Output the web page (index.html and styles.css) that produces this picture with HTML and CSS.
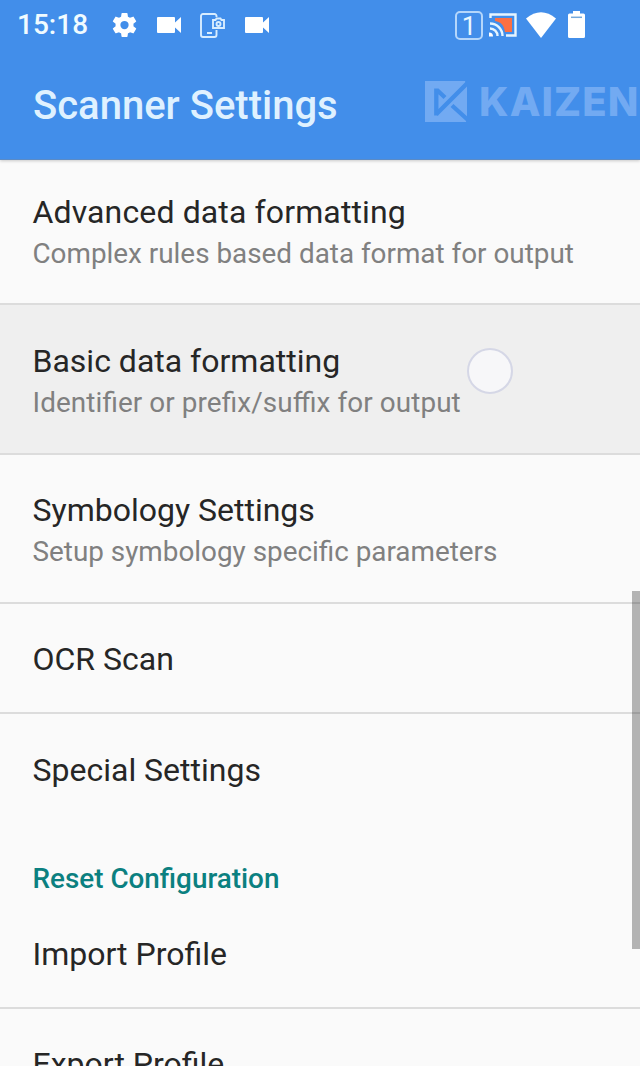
FILE: index.html
```html
<!DOCTYPE html>
<html lang="en">
<head>
<meta charset="utf-8">
<title>Scanner Settings</title>
<link rel="stylesheet" href="styles.css">
</head>
<body>
<div class="screen">
  <header class="header">
    <div class="status">
      <span class="clock">15:18</span>
      <div class="notifications">
        <svg class="gear" viewBox="2 2 20 20"><path d="M19.14 12.94c.04-.3.06-.61.06-.94 0-.32-.02-.64-.07-.94l2.03-1.58a.49.49 0 0 0 .12-.61l-1.92-3.32a.49.49 0 0 0-.59-.22l-2.39.96a7 7 0 0 0-1.62-.94l-.36-2.54a.48.48 0 0 0-.48-.41h-3.84a.48.48 0 0 0-.47.41l-.36 2.54c-.59.24-1.13.57-1.62.94l-2.39-.96a.48.48 0 0 0-.59.22L2.74 8.87a.48.48 0 0 0 .12.61l2.03 1.58a7.500 7.500 0 0 0 0 1.880l-2.030 1.580a.49.49 0 0 0-.12.610l1.920 3.320c.12.22.37.29.59.22l2.390-.96c.5.38 1.030.7 1.620.94l.36 2.540c.05.24.24.41.48.41h3.840c.24 0 .44-.17.470-.41l.36-2.540a7 7 0 0 0 1.620-.94l2.390.96c.22.08.47 0 .59-.22l1.920-3.320a.48.48 0 0 0-.12-.61zM12 15.300a3.300 3.300 0 1 1 0-6.600 3.300 3.300 0 0 1 0 6.600z"/></svg>
        <svg class="video" viewBox="0 0 24 16"><path d="M1 0h16a1 1 0 0 1 1 1v4.500L24 0v16l-6-5.500V15a1 1 0 0 1-1 1H1a1 1 0 0 1-1-1V1a1 1 0 0 1 1-1z"/></svg>
        <svg class="capture" viewBox="0 0 25 25"><path d="M16.500 4V3a2 2 0 0 0-2-2H3a2 2 0 0 0-2 2v19a2 2 0 0 0 2 2h11.500a2 2 0 0 0 2-2v-5M7 20h5M13 7h2.500l1-1.500h4L21.500 7H24v8H13z"/><circle cx="18.500" cy="11" r="2"/></svg>
        <svg class="video" viewBox="0 0 24 16"><path d="M1 0h16a1 1 0 0 1 1 1v4.500L24 0v16l-6-5.500V15a1 1 0 0 1-1 1H1a1 1 0 0 1-1-1V1a1 1 0 0 1 1-1z"/></svg>
      </div>
      <div class="system">
        <span class="badge">1</span>
        <svg class="cast" viewBox="0 0 28 24"><path class="cast-fill" d="M6 5h17v14h-7C15 12 12 9 6 8z"/><path class="cast-line" d="M1.500 5V1.500h25v21H17M1 10.500A12.500 12.500 0 0 1 13.500 23M1 15.500A7.500 7.500 0 0 1 8.500 23"/><path class="cast-dot" d="M0 19.500A4 4 0 0 1 4 23.500H0z"/></svg>
        <svg class="wifi" viewBox="0 0 30 26"><path d="M0 6.500Q15-6 30 6.500L15 26z"/></svg>
        <svg class="battery" viewBox="0 0 17 27"><path d="M5 0h7v2.500h3.500A1.500 1.500 0 0 1 17 4v21.500a1.500 1.500 0 0 1-1.500 1.500h-14A1.500 1.500 0 0 1 0 25.500V4a1.500 1.500 0 0 1 1.500-1.500H5z"/><path class="battery-level" d="M3 6.300h11"/></svg>
      </div>
    </div>
    <div class="titlebar">
      <h1 class="title">Scanner Settings</h1>
      <div class="brand">
        <svg class="brand-mark" viewBox="0 0 42 41"><path d="M0 0H40L42 5V36L41 41H0z"/><path class="brand-cut" d="M11.300 7.500V34.500M11 33.500L43 1.500M12 9L20 16.500M27 24.500L43 39"/></svg>
        <span class="brand-name">KAIZEN</span>
      </div>
    </div>
  </header>
  <main class="list">
    <section class="row first"><h2 class="label">Advanced data formatting</h2><p class="summary">Complex rules based data format for output</p></section>
    <section class="row pressed"><h2 class="label">Basic data formatting</h2><p class="summary">Identifier or prefix/suffix for output</p><span class="touch"></span></section>
    <section class="row"><h2 class="label">Symbology Settings</h2><p class="summary">Setup symbology specific parameters</p></section>
    <section class="row single"><h2 class="label">OCR Scan</h2></section>
    <section class="row single last"><h2 class="label">Special Settings</h2></section>
    <h3 class="category">Reset Configuration</h3>
    <section class="row single import"><h2 class="label">Import Profile</h2></section>
    <section class="row single"><h2 class="label">Export Profile</h2></section>
  </main>
  <div class="scrollbar"></div>
</div>
</body>
</html>
```
FILE: styles.css
```css
* { box-sizing: border-box; }
body { margin: 0; font-family: Roboto, sans-serif; background: #fafafa; }
h1, h2, h3, p { margin: 0; font-weight: 400; white-space: nowrap; }
svg { display: block; fill: #fff; flex: none; }
.screen { position: relative; width: 640px; height: 1066px; overflow: hidden; }
.header { height: 160px; background: #428eea; border-bottom: 1px solid #5b8bc6; box-shadow: 0 1px 3px #0003; }
.status { display: flex; align-items: center; height: 50px; padding: 0 54px 0 17px; }
.clock { width: 95px; color: #f0fbff; font-size: 28px; font-weight: 500; line-height: 52px; }
.notifications { display: flex; align-items: center; }
.gear { width: 25px; height: 26px; }
.video { width: 24px; height: 16px; margin-left: 20px; }
.capture { width: 25px; height: 25px; margin-left: 19px; fill: none; stroke: #d8edff; stroke-width: 1.900; }
.system { display: flex; align-items: center; margin-left: auto; }
.badge { width: 28px; height: 29px; border: 2px solid #b4d6fb; border-radius: 5px; color: #e8f6ff; font-size: 26px; line-height: 27px; text-align: center; }
.cast { width: 28px; height: 24px; margin-left: 6px; }
.cast-fill { fill: #fb7044; }
.cast-line { fill: none; stroke: #e6f5ff; stroke-width: 2.400; }
.wifi { width: 30px; height: 26px; margin-left: 9px; }
.battery { width: 17px; height: 27px; margin: 0 1px 2px 12px; }
.battery-level { stroke: #74a9dc; stroke-width: 1.500; }
.titlebar { display: flex; justify-content: space-between; height: 109px; padding: 31px 0 0 33px; }
.title { color: #dff1ff; font-size: 40px; font-weight: 500; line-height: 49px; }
.brand { display: flex; width: 215px; gap: 12px; }
.brand-mark { width: 42px; height: 41px; fill: #72aaf2; }
.brand-cut { fill: none; stroke: #428eea; stroke-width: 4.300; }
.brand-name { color: #72aaf2; font-family: Inter, sans-serif; font-size: 40px; font-weight: 800; letter-spacing: 1.100px; line-height: 41px; }
.row { position: relative; height: 149.300px; padding: 36.500px 32.500px 0; border-bottom: 2.500px solid #dcdcdc; }
.first { height: 145.300px; padding-top: 33px; }
.first .label { letter-spacing: .13px; }
.pressed { background: #efefef; }
.pressed .summary { letter-spacing: .1px; font-feature-settings: "liga" 1; }
.single { height: 110.600px; }
.last { border-bottom: 0; height: 118px; }
.import { height: 92.500px; padding-top: 19px; }
.label { color: #262626; font-size: 32px; line-height: 38px; }
.summary { margin-top: 4px; color: #808080; font-size: 27.850px; line-height: 38px; }
.category { height: 84px; padding: 30px 32.500px 0; color: #0b8080; font-size: 27.850px; font-weight: 500; line-height: 34px; }
.touch { position: absolute; left: 467px; top: 43px; width: 46px; height: 46px; border: 2px solid #d5d7e6; border-radius: 50%; background: #f7f7f9; }
.scrollbar { position: absolute; right: 0; top: 591px; width: 8px; height: 358px; background: #00000048; }
```
